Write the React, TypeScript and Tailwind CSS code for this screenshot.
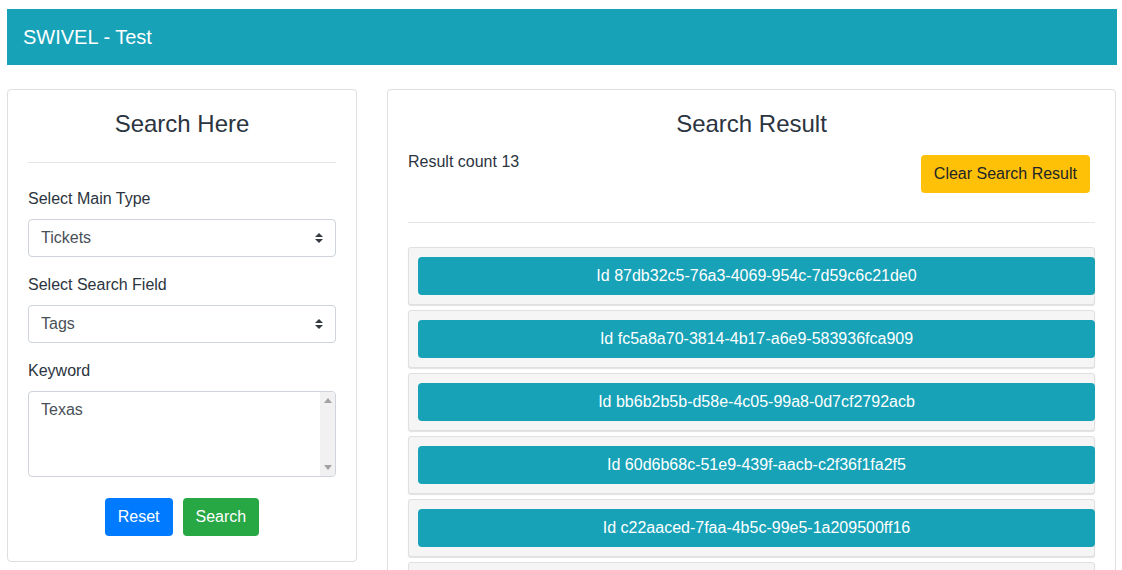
import React from 'react'

const ids = [
  '87db32c5-76a3-4069-954c-7d59c6c21de0',
  'fc5a8a70-3814-4b17-a6e9-583936fca909',
  'bb6b2b5b-d58e-4c05-99a8-0d7cf2792acb',
  '60d6b68c-51e9-439f-aacb-c2f36f1fa2f5',
  'c22aaced-7faa-4b5c-99e5-1a209500ff16',
  '3b1e8c52-9d1f-4a7e-8c3a-4e2f9b7d1c05',
]

function Caret() {
  return (
    <svg className="absolute right-[13px] top-1/2 -translate-y-1/2 pointer-events-none" width="8" height="10" viewBox="0 0 8 10">
      <path d="M4 0 L8 4 H0 Z" fill="#343a40" />
      <path d="M4 10 L0 6 H8 Z" fill="#343a40" />
    </svg>
  )
}

function SelectBox({ value }: { value: string }) {
  return (
    <div className="relative">
      <select
        defaultValue={value}
        className="w-full h-[38px] appearance-none rounded-[4px] border border-[#ced4da] bg-white pl-[12px] pr-8 text-[16px] text-[#495057] outline-none"
      >
        <option>{value}</option>
      </select>
      <Caret />
    </div>
  )
}

export default function App() {
  return (
    <div className="min-h-screen bg-white pt-[9px] pl-[7px] pr-[5px] text-[#212529]" style={{ fontFamily: '"Liberation Sans", Arial, sans-serif' }}>
      {/* Navbar */}
      <div className="h-[56px] bg-[#17a2b8] flex items-center px-[16px]">
        <span className="text-white text-[20px]">SWIVEL - Test</span>
      </div>

      <div className="flex items-start gap-[30px] mt-[24px] pr-[1px]">
        {/* Search form */}
        <div className="w-[350px] shrink-0 rounded-[4px] border border-[#dfdfdf] px-[20px] pt-[19px] pb-[25px]">
          <h3 className="text-center text-[24px] leading-[29px] text-[#2b3440]">Search Here</h3>
          <hr className="mt-[24px] mb-[24px] border-t border-[#e5e5e5]" />

          <label className="block text-[16px] leading-[24px] mb-[8px] text-[#2b3440]">Select Main Type</label>
          <SelectBox value="Tickets" />

          <label className="block text-[16px] leading-[24px] mt-[16px] mb-[8px] text-[#2b3440]">Select Search Field</label>
          <SelectBox value="Tags" />

          <label className="block text-[16px] leading-[24px] mt-[16px] mb-[8px] text-[#2b3440]">Keyword</label>
          <div className="relative">
            <textarea
              defaultValue="Texas"
              className="block w-full h-[86px] resize-none overflow-hidden rounded-[4px] border border-[#ced4da] pl-[12px] pr-[20px] py-[6px] text-[16px] leading-[24px] text-[#495057] outline-none"
            />
            {/* scrollbar */}
            <div className="absolute right-[1px] top-[1px] bottom-[1px] w-[15px] rounded-r-[3px] bg-[#f1f1f1] flex flex-col items-center justify-between py-[6px] pointer-events-none">
              <svg width="8" height="5" viewBox="0 0 8 5"><path d="M4 0 L8 5 H0 Z" fill="#a3a3a3" /></svg>
              <svg width="8" height="5" viewBox="0 0 8 5"><path d="M4 5 L0 0 H8 Z" fill="#a3a3a3" /></svg>
            </div>
          </div>

          <div className="flex justify-center gap-[10px] mt-[21px]">
            <button className="h-[38px] px-[13px] rounded-[4px] bg-[#007bff] text-white text-[16px]">Reset</button>
            <button className="h-[38px] px-[13px] rounded-[4px] bg-[#28a745] text-white text-[16px]">Search</button>
          </div>
        </div>

        {/* Results */}
        <div className="flex-1 rounded-[4px] border border-[#dfdfdf] px-[20px] pt-[19px] pb-[20px]">
          <h3 className="text-center text-[24px] leading-[29px] text-[#2b3440]">Search Result</h3>
          <div className="flex items-start justify-between mt-[12px]">
            <span className="text-[16px] leading-[24px] text-[#2b3440]">Result count 13</span>
            <button className="mt-[5px] mr-[5px] h-[38px] px-[13px] rounded-[4px] bg-[#ffc107] text-[#212529] text-[16px]">
              Clear Search Result
            </button>
          </div>
          <hr className="mt-[29px] mb-[24px] border-t border-[#e5e5e5]" />

          <div className="flex flex-col gap-[5px]">
            {ids.map((id) => (
              <div
                key={id}
                className="rounded-[3px] border border-[#e0e0e0] bg-[#f5f5f5] pl-[9px] py-[9px] shadow-[0_1px_1px_rgba(0,0,0,0.12)]"
              >
                <button className="w-[calc(100%+1px)] h-[38px] rounded-[4px] bg-[#17a2b8] text-white text-[16px]">
                  Id {id}
                </button>
              </div>
            ))}
          </div>
        </div>
      </div>
    </div>
  )
}
